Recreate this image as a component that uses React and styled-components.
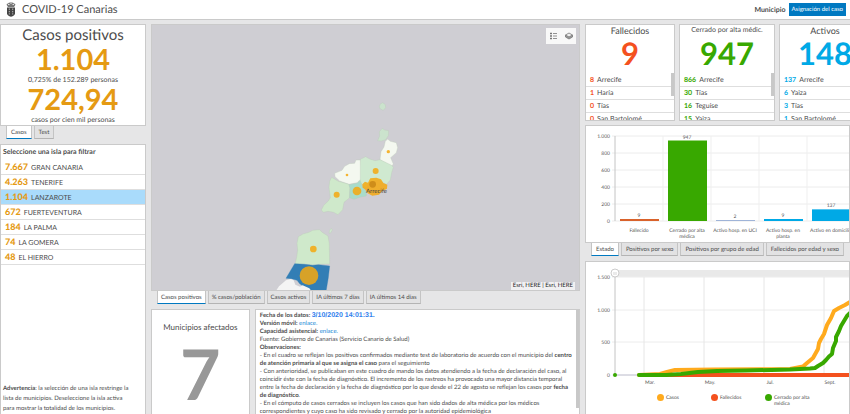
import { useState } from "react";
import styled, { createGlobalStyle } from "styled-components";

const GlobalStyle = createGlobalStyle`
  * {
    box-sizing: border-box;
    margin: 0;
    padding: 0;
  }

  body {
    background-color: #e6e6e7;
    color: #4c4c4c;
    font-family: Lato, "Open Sans", sans-serif;
    font-size: 7px;
    text-rendering: geometricPrecision;
  }

  button {
    font-family: inherit;
    color: inherit;
    text-rendering: inherit;
    cursor: pointer;
  }

  ul {
    list-style: none;
  }

  a {
    color: #1a8ad6;
    text-decoration: none;
  }
`;

const Page = styled.div`
  height: 100vh;
  display: flex;
  flex-direction: column;
  overflow: hidden;
`;

const Header = styled.header`
  display: flex;
  align-items: center;
  gap: 6px;
  height: 20px;
  padding: 0 4px 0 6px;
  background-color: white;
  border-bottom: 1px solid #cacaca;
`;

const Title = styled.h1`
  flex: 1;
  font-size: 11px;
  font-weight: 400;
`;

const HeaderFilter = styled.div`
  display: flex;
  align-items: center;
  gap: 3px;
`;

const HeaderLabel = styled.span`
  font-size: 7px;
  font-weight: 700;
`;

const HeaderButton = styled.button`
  height: 13px;
  padding: 0 3px;
  border: none;
  background-color: #0079c1;
  font-size: 6px;

  && {
    color: white;
  }
`;

const Board = styled.main`
  flex: 1;
  min-height: 0;
  display: grid;
  grid-template-columns: 146fr 429fr 265fr;
  gap: 5px;
  padding-top: 4px;
`;

const Column = styled.div`
  display: flex;
  flex-direction: column;
  min-width: 0;
  min-height: 0;
  overflow: hidden;
`;

const Card = styled.section`
  position: relative;
  background-color: white;
  border: 1px solid #cacaca;
  overflow: hidden;
`;

const TallCard = styled(Card)`
  flex: 1;
  min-height: 0;
  display: flex;
  flex-direction: column;
  border-bottom: none;
`;

const TabBar = styled.div`
  display: flex;
  gap: 2px;
  height: 18px;
  padding-left: 6px;
`;

const Tab = styled.button`
  height: 13px;
  padding: 0 ${(props) => (props.$compact ? 3 : 4)}px;
  border: 1px solid #c4c4c4;
  border-top: none;
  background-color: ${(props) => (props.$active ? "white" : "#e2e2e3")};
  border-bottom-color: ${(props) => (props.$active ? "#0079c1" : "#b4b4b4")};
  font-size: 6px;
  white-space: nowrap;
`;

const Summary = styled(Card)`
  height: 102px;
  text-align: center;
`;

const SummaryTitle = styled.h2`
  font-size: 15px;
  line-height: 20px;
  font-weight: 400;
`;

const SummaryNumber = styled.p`
  color: #e59a13;
  font-size: 29px;
  line-height: 30px;
  font-weight: 700;
`;

const SummaryText = styled.p`
  font-size: 7px;
  line-height: 10px;
`;

const ListTitle = styled.h3`
  padding: 2px;
  font-size: 7px;
  line-height: 11px;
`;

const IslandButton = styled.button`
  display: flex;
  align-items: baseline;
  gap: 3px;
  width: 100%;
  height: 15px;
  padding-left: 4px;
  border: none;
  border-bottom: 1px solid #dedede;
  background-color: ${(props) => (props.$active ? "#a9dbfb" : "white")};
  font-size: 7px;
  line-height: 14px;
  text-align: left;
`;

const IslandCount = styled.strong`
  color: #e59a13;
  font-size: 9px;
  font-weight: 900;
`;

const Warning = styled.p`
  margin-top: auto;
  padding: 0 12px 0 2px;
  font-size: 6px;
  line-height: 10px;
`;

const MapCard = styled(Card)`
  flex: 1;
  min-height: 0;
  background-color: #cfced3;
`;

const MapTools = styled.div`
  position: absolute;
  top: 3px;
  right: 3px;
  display: flex;
  background-color: #f8f8f8;
`;

const MapTool = styled.button`
  display: flex;
  align-items: center;
  justify-content: center;
  width: 15px;
  height: 16px;
  border: none;
  background: none;
`;

const Attribution = styled.div`
  position: absolute;
  right: 4px;
  bottom: 0;
  padding: 0 2px;
  background-color: rgba(255, 255, 255, 0.7);
  font-size: 6px;
  line-height: 8px;
  color: #222;
`;

const BottomRow = styled.div`
  display: grid;
  grid-template-columns: 99fr 326fr;
  gap: 5px;
  height: 105px;
`;

const TownsCard = styled(Card)`
  border-bottom: none;
  padding-top: 11px;
  text-align: center;
`;

const TownsTitle = styled.h2`
  font-size: 8px;
  line-height: 12px;
  font-weight: 400;
`;

const TownsNumber = styled.p`
  color: #989898;
  font-size: 70px;
  line-height: 80px;
  font-weight: 700;
`;

const InfoCard = styled(Card)`
  border-bottom: none;
  padding: 2px 4px;
  font-size: 6px;
  line-height: 8px;
`;

const DateValue = styled.strong`
  color: #2f80ed;
  font-family: "Liberation Sans", sans-serif;
  font-size: 7px;
`;

const Thumb = styled.span`
  position: absolute;
  top: ${(props) => props.$top}px;
  right: 0;
  width: 3px;
  height: ${(props) => props.$height}px;
  background-color: #c8c8c8;
`;

const StatsRow = styled.div`
  display: grid;
  grid-template-columns: 90px 96px 92px;
  gap: 4px;
  height: 97px;
  margin-bottom: 4px;
`;

const StatCard = styled(Card)`
  text-align: center;
`;

const StatTitle = styled.h2`
  font-size: ${(props) => props.$size}px;
  line-height: 11px;
  font-weight: 400;
  white-space: nowrap;
`;

const StatNumber = styled.p`
  margin-bottom: 4px;
  color: ${(props) => props.$color};
  font-size: 31px;
  line-height: 34px;
  font-weight: 700;
`;

const StatItem = styled.li`
  display: flex;
  gap: 3px;
  height: 13px;
  padding-left: 4px;
  border-bottom: 1px solid #dedede;
  font-size: 7px;
  line-height: 13px;

  strong {
    color: ${(props) => props.$color};
  }
`;

const ChartCard = styled(Card)`
  height: 118px;
`;

const Chart = styled.svg`
  display: block;
  font-size: 5px;
  fill: #555;
`;

const Legend = styled.ul`
  display: flex;
  padding-left: 71px;
`;

const LegendItem = styled.li`
  flex: none;
  display: flex;
  gap: 2px;
  width: 54px;
  font-size: 5px;
  line-height: 6px;

  span {
    padding-top: 1px;
  }
`;

const Dot = styled.i`
  flex: none;
  width: 7px;
  height: 7px;
  border-radius: 50%;
  background-color: ${(props) => props.$color};
`;

const RED = "#f4511e";
const GREEN = "#38a800";
const BLUE = "#00a9e6";
const ORANGE = "#ffaa1d";

const islands = [
  ["7.667", "GRAN CANARIA"],
  ["4.263", "TENERIFE"],
  ["1.104", "LANZAROTE"],
  ["672", "FUERTEVENTURA"],
  ["184", "LA PALMA"],
  ["74", "LA GOMERA"],
  ["48", "EL HIERRO"],
];

const stats = [
  {
    title: "Fallecidos",
    size: 9,
    total: "9",
    color: RED,
    rows: [["8", "Arrecife"], ["1", "Haría"], ["0", "Tías"], ["0", "San Bartolomé"]],
  },
  {
    title: "Cerrado por alta médic.",
    size: 7,
    total: "947",
    color: GREEN,
    rows: [["866", "Arrecife"], ["30", "Tías"], ["16", "Teguise"], ["15", "Yaiza"]],
  },
  {
    title: "Activos",
    size: 9,
    total: "148",
    color: BLUE,
    rows: [["137", "Arrecife"], ["6", "Yaiza"], ["3", "Tías"], ["1", "San Bartolomé"]],
  },
];

const bars = [
  { value: 9, color: "#d9622b", lines: ["Fallecido"] },
  { value: 947, color: GREEN, lines: ["Cerrado por alta", "médica"] },
  { value: 2, color: "#9fb4d8", lines: ["Activo hosp. en UCI"] },
  { value: 9, color: BLUE, lines: ["Activo hosp. en", "planta"] },
  { value: 137, color: BLUE, lines: ["Activo en domicilio"] },
];

function Tabs({ items, compact }) {
  const [active, setActive] = useState(items[0]);

  return (
    <TabBar role="tablist">
      {items.map((item) => (
        <Tab
          key={item}
          role="tab"
          aria-selected={item === active}
          $active={item === active}
          $compact={compact}
          onClick={() => setActive(item)}
        >
          {item}
        </Tab>
      ))}
    </TabBar>
  );
}

function Crest() {
  return (
    <svg width="10" height="15" viewBox="0 0 10 15" aria-hidden="true">
      <path d="M1 3.5Q0 1.5 2 1.5Q3 0 5 .5Q7 0 8 1.5Q10 1.5 9 3.5L8 5H2Z" fill="#777" />
      <path d="M2 2.5h1.500M6.500 2.500h1.500M4.500 1.500h1" stroke="#fff" strokeWidth=".8" />
      <path d="M1 5.500h8v6Q8.500 14 5 14.700Q1.500 14 1 11.500Z" fill="#444" />
      <path d="M3.300 6.500v6M6.700 6.500v6" stroke="#bbb" strokeWidth="1" strokeDasharray="1.400 1" />
    </svg>
  );
}

function IslandMap() {
  return (
    <svg width="100%" height="100%" viewBox="0 0 427 265" preserveAspectRatio="xMidYMid slice">
      <g transform="translate(118 65) scale(.3333)" stroke="#b9c9b5" strokeWidth="1">
        <path d="M330 43l8-5 8 6 1 9-7 8-9-4-3-6z" fill="#cbe3cd" />
        <path d="M337 115l7 5 12 2-1 15-8 12-13 4-11-1 6-14-1-13z" fill="#cbe3cd" />
        <path d="M353 147l8 7 18 4 4 15-4 15-17 15 8 19-5 7-35-20 3-24 9-14 4-17z" fill="#f4f8f0" />
        <path d="M271 208l16-8 12 7 16 5 15-3 35 17 5 6-5 16-4 22-11 13-9-4-15-9-27 7-10 18-16-14-8-10z" fill="#cfe9d0" />
        <path d="M271 210l0 58-9 10-25 5-28-10-14-13-1-10 22-9 8-12 14-8 16-1 4-10z" fill="#f4f8f0" />
        <path d="M185 262l20 12 32 9 3 10-2 31-16 13-4 22-14 15-13-7-17-3-14 3-6-7 8-15 13-12 6-10-4-31 2-18z" fill="#cfe9cb" />
        <path d="M237 284l25-5 9-8 5 15 13 19 0 13-17 3-20 7-13-5 1-28z" fill="#a8dccb" />
        <path d="M184 415l3 5-5 9-5 1 2-9z" fill="#cfe5cf" />
        <path d="M85 440l14-8 18-5 11-6 20-2 10 9 16 10 4 24 1 60-33 1-18 2-25-3-28 0 5-20 3-22-2-20z" fill="#cfe9cb" />
        <path d="M74 521l29 2 25 3 18-2 33 4-4 35-7 42-12-2-16-2-19 4-18-14-14-10-8-10-17-5-16-1z" fill="#327eb5" stroke="#327eb5" />
        <path d="M48 571l14-4 9 4 5 13 14 6 8-4 20 9 10 12H15l12-18z" fill="#f4f4f4" stroke="none" />
      </g>
      <g transform="translate(118 65) scale(.3333)" fill="#f5a80f" fillOpacity=".85">
        <circle cx="355" cy="185" r="5" />
        <circle cx="231" cy="255" r="4" />
        <circle cx="317" cy="243" r="9" />
        <circle cx="200" cy="314" r="9" />
        <circle cx="261" cy="303" r="13" />
        <circle cx="130" cy="477" r="10" />
        <circle cx="117" cy="557" r="28" />
        <path d="M277 283l8-8 9 3 7-13 18-2 14 5 7 11 12 5-1 12-14 7-10 11-20 3-14-7-8-12-7-5z" />
        <circle cx="308" cy="283" r="10" fill="#c98718" />
      </g>
      <text x="214" y="168" fontSize="6" fill="#444">Arrecife</text>
    </svg>
  );
}

function StatusChart() {
  const base = 95;
  const scale = 85 / 1000;

  return (
    <Chart width="270" height="116" role="img" aria-label="Casos por estado">
      {[0, 200, 400, 600, 800, 1000].map((tick) => (
        <g key={tick}>
          <line x1="26" x2="270" y1={base - tick * scale} y2={base - tick * scale} stroke="#ececec" />
          <text x="24" y={base - tick * scale + 2} textAnchor="end">
            {tick === 1000 ? "1.000" : tick}
          </text>
        </g>
      ))}
      <line x1="29" x2="29" y1="10" y2={base} stroke="#c4c4c4" />
      {bars.map(({ value, color, lines }, i) => {
        const center = 53 + i * 48;
        const height = Math.max(value * scale, value > 5 ? 2 : 1);
        return (
          <g key={lines.join(" ")} textAnchor="middle">
            <line x1={center + 24} x2={center + 24} y1="10" y2={base} stroke="#efefef" />
            <rect x={center - 19} y={base - height} width="39" height={height} fill={color} />
            <text x={center} y={base - height - 2}>{value}</text>
            {lines.map((line, n) => (
              <text key={line} x={center} y={106 + n * 6}>{line}</text>
            ))}
          </g>
        );
      })}
    </Chart>
  );
}

function EvolutionChart() {
  return (
    <Chart width="270" height="132" role="img" aria-label="Evolución de casos">
      <rect x="29" y="8" width="241" height="7" fill="#e9e9e9" />
      {[["0", 113], ["500", 80], ["1.000", 48], ["1.500", 15]].map(([label, y]) => (
        <g key={label}>
          <line x1="26" x2="270" y1={y} y2={y} stroke="#ececec" />
          <text x="24" y={y + 2} textAnchor="end">{label}</text>
        </g>
      ))}
      {["Mar.", "May.", "Jul.", "Sept."].map((month, i) => (
        <g key={month}>
          <line x1={58 + i * 60} x2={58 + i * 60} y1="15" y2="113" stroke="#e6e6e6" />
          <text x={64 + i * 60} y="122" textAnchor="middle">{month}</text>
        </g>
      ))}
      <line x1="29" x2="29" y1="15" y2="113" stroke="#c4c4c4" />
      <line x1="29" x2="52" y1="113" y2="113" stroke="#c4c4d4" />
      <circle cx="29" cy="11" r="4" fill="#fff" stroke="#ccc" />
      <path d="M28 10v3M30 10v3" stroke="#aaa" strokeWidth=".5" />
      <g fill="none" strokeWidth="4" strokeLinecap="round" strokeLinejoin="round">
        <path
          d="M53 113L74 112L81 110L89 108L128 107.500L204 107L217 104.500L221 101L227 96L232 87L233 81L235 77L238 72L241 63L245 56L248 49L253 46L259 43L264 40L272 38"
          stroke={ORANGE}
        />
        <path d="M78 113H272" stroke={RED} />
        <path
          d="M53 113H80L95 112L112 110L131 109L160 108.500L204 107.500L224 106.500L229 106L232 104L237 101L240 98L243 94.500L246 92L247 86L250 79L250 75L253 69L255 64L258 59L261 54L264 51L272 49"
          stroke={GREEN}
        />
        <path d="M29 113h0" stroke={GREEN} />
      </g>
    </Chart>
  );
}

function App() {
  const [island, setIsland] = useState("LANZAROTE");

  return (
    <>
      <GlobalStyle />
      <Page>
        <Header>
          <Crest />
          <Title>COVID-19 Canarias</Title>
          <HeaderFilter>
            <HeaderLabel id="municipio">Municipio</HeaderLabel>
            <HeaderButton aria-describedby="municipio">Asignación del caso</HeaderButton>
          </HeaderFilter>
        </Header>
        <Board>
          <Column>
            <Summary>
              <SummaryTitle>Casos positivos</SummaryTitle>
              <SummaryNumber>1.104</SummaryNumber>
              <SummaryText>0,725% de 152.289 personas</SummaryText>
              <SummaryNumber>724,94</SummaryNumber>
              <SummaryText>casos por cien mil personas</SummaryText>
            </Summary>
            <Tabs items={["Casos", "Test"]} />
            <TallCard>
              <ListTitle>Seleccione una isla para filtrar</ListTitle>
              <ul>
                {islands.map(([count, name]) => (
                  <li key={name}>
                    <IslandButton $active={name === island} onClick={() => setIsland(name)}>
                      <IslandCount>{count}</IslandCount> {name}
                    </IslandButton>
                  </li>
                ))}
              </ul>
              <Warning>
                <strong>Advertencia</strong>: la selección de una isla restringe la lista de
                municipios. Deseleccione la isla activa para mostrar la totalidad de los
                municipios.
              </Warning>
            </TallCard>
          </Column>

          <Column>
            <MapCard>
              <IslandMap />
              <MapTools>
                <MapTool aria-label="Leyenda">
                  <svg width="8" height="8" viewBox="0 0 8 8" stroke="#777">
                    <path d="M0 1.500h2M0 4h2M0 6.500h2" strokeWidth="1.500" />
                    <path d="M3 1.500h4M3 4h4M3 6.500h4" strokeWidth=".8" />
                  </svg>
                </MapTool>
                <MapTool aria-label="Capas">
                  <svg width="8" height="8" viewBox="0 0 8 8" fill="none" stroke="#777" strokeWidth=".8">
                    <path d="M.500 3V5L4 7L7.500 5V3" fill="#999" />
                    <path d="M.500 3L4 1L7.500 3L4 5Z" fill="#eee" />
                  </svg>
                </MapTool>
              </MapTools>
              <Attribution>Esri, HERE | Esri, HERE</Attribution>
            </MapCard>
            <Tabs
              compact
              items={["Casos positivos", "% casos/población", "Casos activos", "IA últimos 7 días", "IA últimos 14 días"]}
            />
            <BottomRow>
              <TownsCard>
                <TownsTitle>Municipios afectados</TownsTitle>
                <TownsNumber>7</TownsNumber>
              </TownsCard>
              <InfoCard>
                <p><strong>Fecha de los datos: </strong><DateValue>3/10/2020 14:01:31.</DateValue></p>
                <p><strong>Versión móvil:</strong> <a href="#movil">enlace.</a></p>
                <p><strong>Capacidad asistencial:</strong> <a href="#capacidad">enlace.</a></p>
                <p>Fuente: Gobierno de Canarias (Servicio Canario de Salud)</p>
                <p><strong>Observaciones:</strong></p>
                <p>
                  - En el cuadro se reflejan los positivos confirmados mediante test de laboratorio de acuerdo con el
                  municipio del <strong>centro de atención primaria al que se asigna el caso</strong> para el seguimiento
                </p>
                <p>
                  - Con anterioridad, se publicaban en este cuadro de mando los datos atendiendo a la fecha de
                  declaración del caso, al coincidir éste con la fecha de diagnóstico. El incremento de los rastreos ha
                  provocado una mayor distancia temporal entre la fecha de declaración y la fecha de diagnóstico por lo
                  que desde el 22 de agosto se reflejan los casos por <strong>fecha de diagnóstico</strong>.
                </p>
                <p>
                  - En el cómputo de casos cerrados se incluyen los casos que han sido dados de alta médica por los
                  médicos correspondientes y cuyo caso ha sido revisado y cerrado por la autoridad epidemiológica
                </p>
                <Thumb $top={0} $height={98} />
              </InfoCard>
            </BottomRow>
          </Column>

          <Column>
            <StatsRow>
              {stats.map(({ title, size, total, color, rows }) => (
                <StatCard key={title}>
                  <StatTitle $size={size}>{title}</StatTitle>
                  <StatNumber $color={color}>{total}</StatNumber>
                  <ul>
                    {rows.map(([count, town]) => (
                      <StatItem key={town} $color={color}>
                        <strong>{count}</strong> {town}
                      </StatItem>
                    ))}
                  </ul>
                  <Thumb $top={48} $height={23} />
                </StatCard>
              ))}
            </StatsRow>
            <ChartCard>
              <StatusChart />
            </ChartCard>
            <Tabs
              items={["Estado", "Positivos por sexo", "Positivos por grupo de edad", "Fallecidos por edad y sexo"]}
            />
            <TallCard>
              <EvolutionChart />
              <Legend>
                <LegendItem><Dot $color={ORANGE} /><span>Casos</span></LegendItem>
                <LegendItem><Dot $color={RED} /><span>Fallecidos</span></LegendItem>
                <LegendItem><Dot $color={GREEN} /><span>Cerrado por alta médica</span></LegendItem>
              </Legend>
            </TallCard>
          </Column>
        </Board>
      </Page>
    </>
  );
}

export default App;
